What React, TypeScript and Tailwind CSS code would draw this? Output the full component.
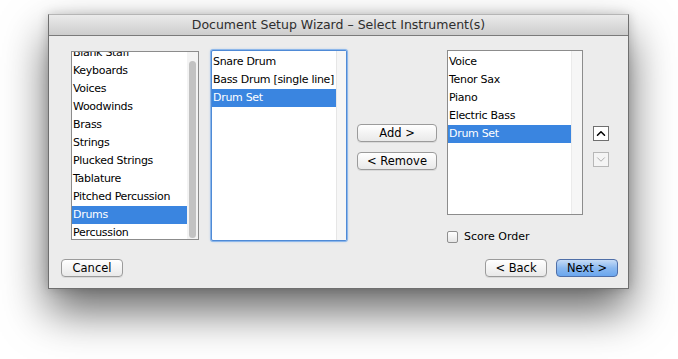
import { ChevronDown, ChevronUp } from "lucide-react";

const families = [
  "Blank Staff",
  "Keyboards",
  "Voices",
  "Woodwinds",
  "Brass",
  "Strings",
  "Plucked Strings",
  "Tablature",
  "Pitched Percussion",
  "Drums",
  "Percussion",
];

const drums = ["Snare Drum", "Bass Drum [single line]", "Drum Set"];

const score = ["Voice", "Tenor Sax", "Piano", "Electric Bass", "Drum Set"];

function Row({ label, selected }: { label: string; selected?: boolean }) {
  return (
    <div
      className={
        selected
          ? "h-[18px] pl-[1px] text-[11px] tracking-[-0.3px] leading-[18px] whitespace-nowrap overflow-hidden bg-[#3a85e0] text-white"
          : "h-[18px] pl-[1px] text-[11px] tracking-[-0.3px] leading-[18px] whitespace-nowrap overflow-hidden text-black"
      }
    >
      {label}
    </div>
  );
}

function MacButton({ label, className = "" }: { label: string; className?: string }) {
  return (
    <button
      className={`h-[18px] rounded-[4px] border border-[#9b9b9b] bg-gradient-to-b from-white to-[#e9e9e9] text-[11.5px] leading-[16px] text-black shadow-[0_1px_0_rgba(0,0,0,0.08)] ${className}`}
    >
      {label}
    </button>
  );
}

export default function App() {
  return (
    <div className="h-[359px] w-[678px] overflow-hidden bg-white pl-[48px] pt-[14px] font-['DejaVu_Sans',sans-serif] text-[11.5px]">
      <div className="flex h-[275px] w-[581px] flex-col border border-[#6f6f6f] border-t-[#b5b5b5] bg-[#ececec] shadow-[0_22px_42px_rgba(0,0,0,0.6),0_0_10px_rgba(0,0,0,0.18)]">
        {/* title bar */}
        <div className="flex h-[21px] shrink-0 items-center justify-center border-b border-[#7a7a7a] bg-gradient-to-b from-[#ebebeb] to-[#cdcdcd] text-[12.5px] text-[#2e2e2e]">
          Document Setup Wizard – Select Instrument(s)
        </div>

        <div className="flex pl-[22px] pt-[15px]">
          {/* categories */}
          <div className="flex h-[189px] w-[128px] overflow-hidden border border-[#8c8c8c] bg-white">
            <div className="min-w-0 flex-1 -mt-[8px]">
              {families.map((f) => (
                <Row key={f} label={f} selected={f === "Drums"} />
              ))}
            </div>
            <div className="flex w-[11px] justify-center bg-[#f3f3f3] pt-[9px] pb-[1px]">
              <div className="w-[7px] rounded-full bg-[#c2c2c2]" />
            </div>
          </div>

          {/* instruments in family */}
          <div className="ml-[12px] -mt-[1px] flex h-[191px] w-[136px] rounded-[2px] border border-[#4f8ad6] bg-white shadow-[0_0_0_1px_#8db7ea,0_0_3px_#8fb8ea]">
            <div className="min-w-0 flex-1 pt-[2px]">
              {drums.map((d) => (
                <Row key={d} label={d} selected={d === "Drum Set"} />
              ))}
            </div>
            <div className="w-[10px] shrink-0 border-l border-[#e6e6e6] bg-[#f6f6f6]" />
          </div>

          {/* add/remove */}
          <div className="ml-[10px] flex flex-col gap-[10px] pt-[73px]">
            <MacButton label="Add >" className="w-[80px]" />
            <MacButton label="< Remove" className="w-[80px]" />
          </div>

          {/* score list */}
          <div className="ml-[10px] -mt-[1px] flex flex-col">
            <div className="flex h-[165px] w-[136px] border border-[#8c8c8c] bg-white">
              <div className="min-w-0 flex-1 pt-[2px]">
                {score.map((s) => (
                  <Row key={s} label={s} selected={s === "Drum Set"} />
                ))}
              </div>
              <div className="w-[11px] shrink-0 border-l border-[#ebebeb] bg-[#f6f6f6]" />
            </div>
            <label className="mt-[14px] flex items-center gap-[6px] text-[11px] text-black">
              <span className="h-[12px] w-[11px] rounded-[2px] border border-[#8f8f8f] bg-gradient-to-b from-white to-[#e6e6e6]" />
              <span>Score Order</span>
            </label>
          </div>

          {/* move up / down */}
          <div className="ml-[10px] flex flex-col gap-[11px] pt-[75px]">
            <div className="flex h-[15px] w-[16px] items-center justify-center border border-[#6f6f6f] bg-white">
              <ChevronUp size={15} strokeWidth={2.6} className="text-black" />
            </div>
            <div className="flex h-[15px] w-[16px] items-center justify-center border border-[#b7b7b7] bg-[#f4f4f4]">
              <ChevronDown size={15} strokeWidth={1.6} className="text-[#a8a8a8]" />
            </div>
          </div>
        </div>

        {/* footer */}
        <div className="mt-[13px] flex items-center pl-[12px] pr-[10px]">
          <MacButton label="Cancel" className="w-[62px]" />
          <div className="ml-auto flex gap-[9px]">
            <MacButton label="< Back" className="w-[62px]" />
            <button className="h-[18px] w-[62px] rounded-[4px] border border-[#4f6fa8] bg-gradient-to-b from-[#c6dcf6] via-[#8ab8ef] to-[#6aa6ee] text-[11.5px] leading-[16px] text-black">
              Next &gt;
            </button>
          </div>
        </div>
      </div>
    </div>
  );
}
